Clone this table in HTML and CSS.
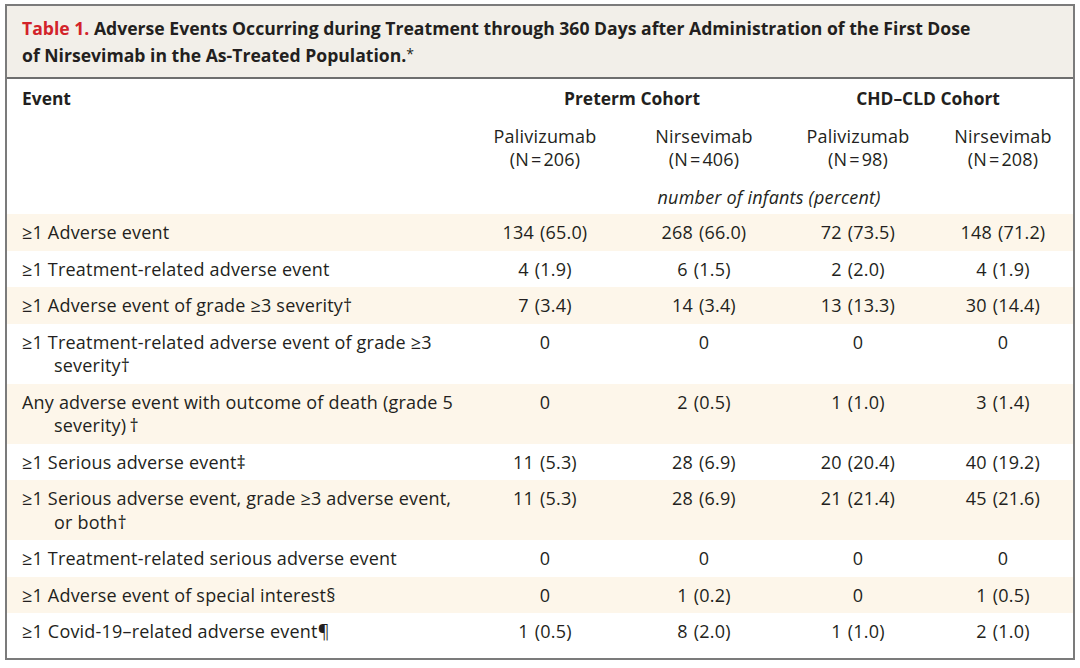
FILE: index.html
```html
<!DOCTYPE html>
<html lang="en">
<head>
<meta charset="utf-8">
<title>Table 1</title>
<link rel="stylesheet" href="styles.css">
</head>
<body>
<div class="frame">
  <div class="caption"><span class="label">Table 1.</span> Adverse Events Occurring during Treatment through 360 Days after Administration of the First Dose<br>of Nirsevimab in the As-Treated Population.<span class="ast">*</span></div>
  <div class="table">
    <div class="head head-top">
      <div class="cell first strong">Event</div>
      <div class="cell span2 strong shift">Preterm Cohort</div>
      <div class="cell span2 strong">CHD–CLD Cohort</div>
    </div>
    <div class="head head-cols">
      <div class="cell first"></div>
      <div class="cell num">Palivizumab<br>(N&#8202;=&#8202;206)</div>
      <div class="cell num">Nirsevimab<br>(N&#8202;=&#8202;406)</div>
      <div class="cell num">Palivizumab<br>(N&#8202;=&#8202;98)</div>
      <div class="cell num">Nirsevimab<br>(N&#8202;=&#8202;208)</div>
    </div>
    <div class="head head-unit">
      <div class="cell first"></div>
      <div class="cell span4 unit">number of infants (percent)</div>
    </div>
    <div class="body">
      <div class="row shade">
        <div class="cell first">≥1 Adverse event</div>
        <div class="cell num">134 (65.0)</div><div class="cell num">268 (66.0)</div><div class="cell num">72 (73.5)</div><div class="cell num">148 (71.2)</div>
      </div>
      <div class="row">
        <div class="cell first">≥1 Treatment-related adverse event</div>
        <div class="cell num">4 (1.9)</div><div class="cell num">6 (1.5)</div><div class="cell num">2 (2.0)</div><div class="cell num">4 (1.9)</div>
      </div>
      <div class="row shade">
        <div class="cell first">≥1 Adverse event of grade ≥3 severity†</div>
        <div class="cell num">7 (3.4)</div><div class="cell num">14 (3.4)</div><div class="cell num">13 (13.3)</div><div class="cell num">30 (14.4)</div>
      </div>
      <div class="row">
        <div class="cell first">≥1 Treatment-related adverse event of grade ≥3<br>severity†</div>
        <div class="cell num">0</div><div class="cell num">0</div><div class="cell num">0</div><div class="cell num">0</div>
      </div>
      <div class="row shade">
        <div class="cell first">Any adverse event with outcome of death (grade 5<br>severity)&#8201;†</div>
        <div class="cell num">0</div><div class="cell num">2 (0.5)</div><div class="cell num">1 (1.0)</div><div class="cell num">3 (1.4)</div>
      </div>
      <div class="row">
        <div class="cell first">≥1 Serious adverse event‡</div>
        <div class="cell num">11 (5.3)</div><div class="cell num">28 (6.9)</div><div class="cell num">20 (20.4)</div><div class="cell num">40 (19.2)</div>
      </div>
      <div class="row shade">
        <div class="cell first">≥1 Serious adverse event, grade ≥3 adverse event,<br>or both†</div>
        <div class="cell num">11 (5.3)</div><div class="cell num">28 (6.9)</div><div class="cell num">21 (21.4)</div><div class="cell num">45 (21.6)</div>
      </div>
      <div class="row">
        <div class="cell first">≥1 Treatment-related serious adverse event</div>
        <div class="cell num">0</div><div class="cell num">0</div><div class="cell num">0</div><div class="cell num">0</div>
      </div>
      <div class="row shade">
        <div class="cell first">≥1 Adverse event of special interest§</div>
        <div class="cell num">0</div><div class="cell num">1 (0.2)</div><div class="cell num">0</div><div class="cell num">1 (0.5)</div>
      </div>
      <div class="row">
        <div class="cell first">≥1 Covid-19–related adverse event¶</div>
        <div class="cell num">1 (0.5)</div><div class="cell num">8 (2.0)</div><div class="cell num">1 (1.0)</div><div class="cell num">2 (1.0)</div>
      </div>
    </div>
  </div>
</div>
</body>
</html>
```

FILE: styles.css
```css
html, body {
  margin: 0;
  padding: 0;
  background: #ffffff;
}

body {
  padding: 4px 5px 6px 5px;
  font-family: "Open Sans", "Noto Sans", sans-serif;
  font-size: 18px;
  letter-spacing: 0.2px;
  color: #231f20;
}

.frame {
  width: 1066px;
  border: 2px solid #7b7b7b;
  background: #ffffff;
  padding-bottom: 8px;
}

.caption {
  background: #f2efe9;
  border-bottom: 2px solid #6e6e6e;
  padding: 9px 15px 9px 15px;
  font-weight: 700;
  font-size: 17.6px;
  line-height: 26px;
  letter-spacing: 0;
}

.caption .label {
  color: #d2232a;
}

.caption .ast {
  font-weight: 400;
  font-size: 14px;
  vertical-align: 3px;
}

.head,
.row {
  display: grid;
  grid-template-columns: 458px 160px 158px 150px 140px;
  line-height: 23.5px;
}

.head-top {
  padding-top: 8px;
}

.head-cols {
  margin-top: 14px;
}

.head-unit {
  margin-top: 14px;
}

.body {
  margin-top: 5px;
}

.row {
  padding: 7px 0 6px 0;
}

.shade {
  background: #fdf6ea;
}

.cell.first {
  padding-left: 47px;
  text-indent: -32px;
}

.head .cell.first {
  padding-left: 15px;
  text-indent: 0;
}

.num {
  text-align: center;
  word-spacing: 1px;
}

.strong {
  font-weight: 700;
  font-size: 17.4px;
  letter-spacing: 0;
}

.span2 {
  grid-column: span 2;
  text-align: center;
}

.shift {
  padding-left: 16px;
}

.span4 {
  grid-column: span 4;
  text-align: center;
}

.unit {
  font-style: italic;
}
```
